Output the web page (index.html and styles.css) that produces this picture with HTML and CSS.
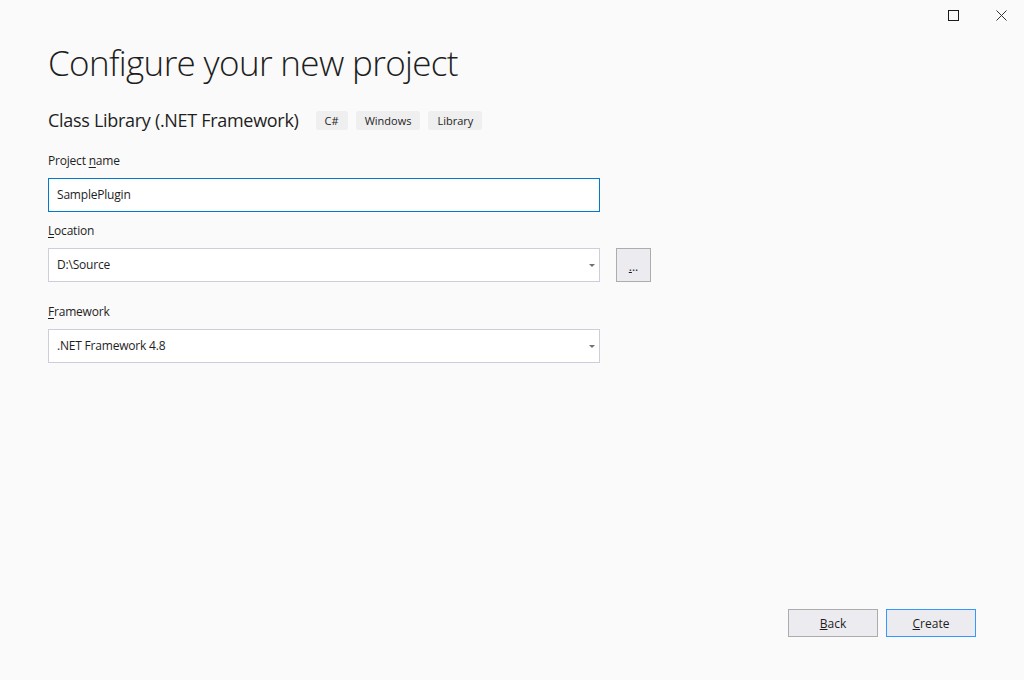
FILE: index.html
```html
<!DOCTYPE html>
<html>
<head>
<meta charset="utf-8">
<link rel="stylesheet" href="styles.css">
</head>
<body>
<div class="window">
  <div class="titlebar">
    <div class="wc max"><svg width="11" height="11" viewBox="0 0 11 11"><rect x="0.5" y="0.5" width="10" height="10" fill="none" stroke="#1a1a1a" stroke-width="1"/></svg></div>
    <div class="wc close"><svg width="11" height="11" viewBox="0 0 11 11"><path d="M0.5 0.5L10.5 10.5M10.5 0.5L0.5 10.5" stroke="#333" stroke-width="1"/></svg></div>
  </div>
  <div class="content">
    <h1 class="title">Configure your new project</h1>
    <div class="subtitle-row">
      <span class="subtitle">Class Library (.NET Framework)</span>
      <span class="tag">C#</span>
      <span class="tag">Windows</span>
      <span class="tag">Library</span>
    </div>

    <label class="label label-first">Project <u>n</u>ame</label>
    <div class="field input-active">SamplePlugin</div>

    <label class="label label-loc"><u>L</u>ocation</label>
    <div class="row">
      <div class="field combo">D:\Source<span class="arrow"></span></div>
      <div class="browse"><span><u>.</u>..</span></div>
    </div>

    <label class="label label-fw"><u>F</u>ramework</label>
    <div class="field combo">.NET Framework 4.8<span class="arrow"></span></div>
  </div>
  <div class="footer">
    <button class="btn"><u>B</u>ack</button>
    <button class="btn btn-default"><u>C</u>reate</button>
  </div>
</div>
</body>
</html>
```
FILE: styles.css
```css
html, body {
  margin: 0;
  padding: 0;
}
body {
  background: #fafafa;
  font-family: "Open Sans", "Noto Sans", sans-serif;
  color: #1e1e1e;
}
.window {
  width: 1024px;
  height: 680px;
  display: flex;
  flex-direction: column;
}
.titlebar {
  height: 32px;
  display: flex;
  justify-content: flex-end;
}
.wc {
  height: 32px;
  display: flex;
  align-items: center;
  justify-content: center;
}
.wc svg { display: block; margin-top: -1px; }
.wc.max { width: 50px; }
.wc.close { width: 46px; }
.content {
  padding: 0 0 0 48px;
  flex: 1;
}
.title {
  margin: 9px 0 0 0;
  font-weight: 300;
  font-size: 35px;
  line-height: 44px;
  letter-spacing: -0.65px;
  color: #1e1e1e;
}
.subtitle-row {
  display: flex;
  align-items: center;
  margin-top: 25px;
  height: 20px;
}
.subtitle {
  font-size: 18px;
  font-weight: 400;
  letter-spacing: -0.3px;
  margin-right: 17px;
}
.tag {
  background: #efefef;
  border-radius: 3px;
  font-size: 11px;
  height: 19px;
  line-height: 19px;
  padding: 0 9px;
  margin-right: 8px;
}
.label {
  display: block;
  font-size: 12px;
  line-height: 16px;
  letter-spacing: -0.2px;
  margin-bottom: 9px;
}
.label-first { margin-top: 23px; }
.label-loc { margin-top: 11px; }
.label-fw { margin-top: 22px; }
.label u { text-decoration-thickness: 1px; text-underline-offset: 2px; }
.field {
  width: 542px;
  height: 32px;
  border: 1px solid #cccedb;
  background: #ffffff;
  font-size: 12px;
  line-height: 32px;
  letter-spacing: -0.2px;
  padding: 0 0 0 8px;
  position: relative;
}
.input-active { border-color: #007acc; }
.combo .arrow {
  position: absolute;
  right: 4px;
  top: 15px;
  width: 0;
  height: 0;
  border-left: 3px solid transparent;
  border-right: 3px solid transparent;
  border-top: 3px solid #717171;
}
.row {
  display: flex;
  align-items: flex-start;
}
.browse {
  margin-left: 16px;
  width: 33px;
  height: 32px;
  border: 1px solid #acacac;
  background: #ececf0;
  font-size: 12px;
  display: flex;
  align-items: center;
  justify-content: center;
}
.browse span { margin-top: 2px; }
.footer {
  display: flex;
  justify-content: flex-end;
  padding: 0 48px 43px 0;
  gap: 8px;
}
.btn {
  width: 90px;
  height: 28px;
  border: 1px solid #acacac;
  background: #ececf0;
  font-family: "Open Sans", "Noto Sans", sans-serif;
  font-size: 12px;
  color: #1e1e1e;
  padding: 0;
  margin: 0;
}
.btn-default { border-color: #3399ff; }
```
